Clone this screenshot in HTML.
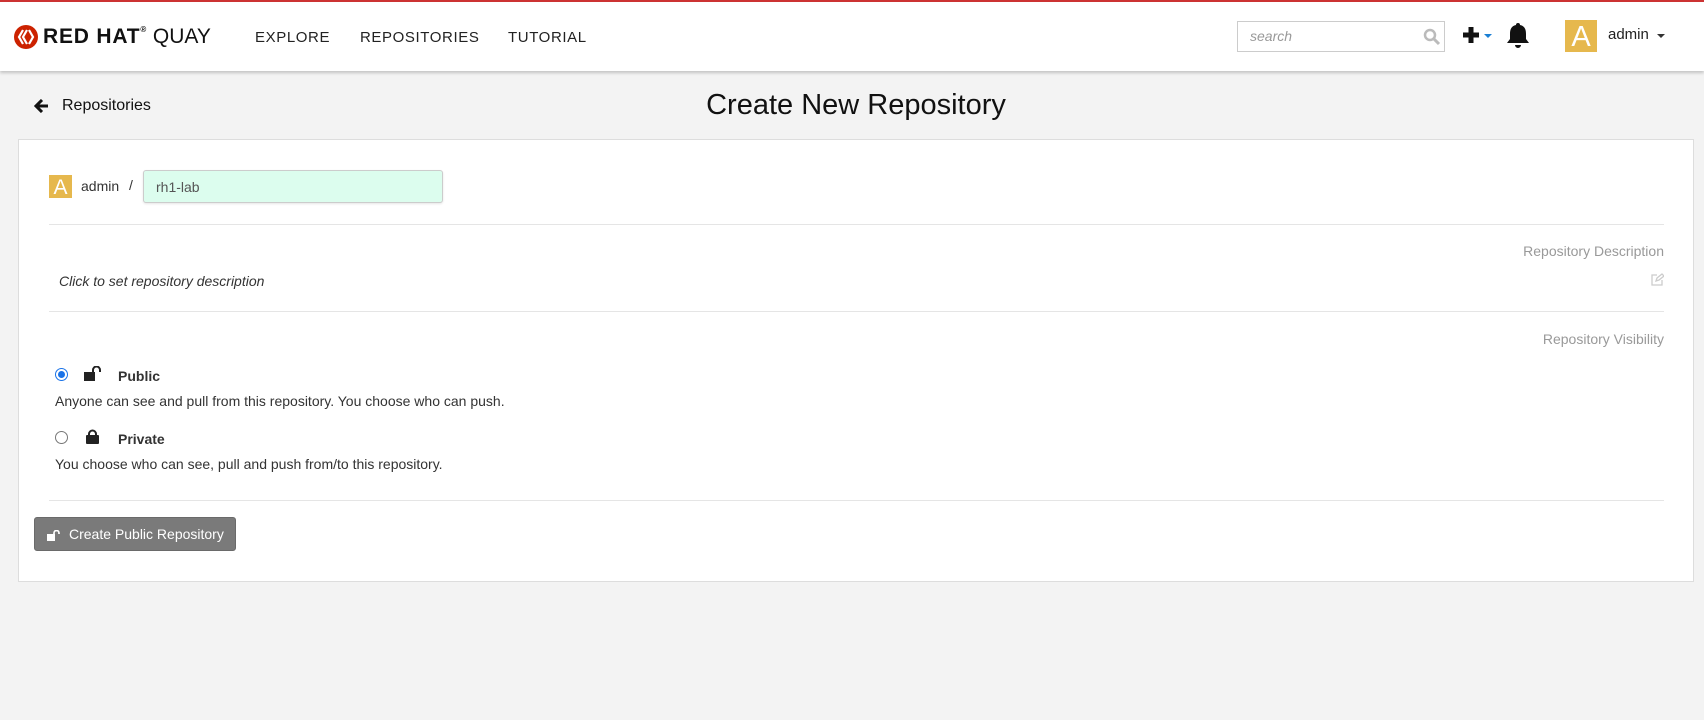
<!DOCTYPE html>
<html><head><meta charset="utf-8"><style>
*{box-sizing:border-box;margin:0;padding:0}
body{width:1704px;height:720px;background:#f3f3f3;font-family:"Liberation Sans",sans-serif;color:#333;position:relative;overflow:hidden;font-size:14px}
.a{position:absolute;white-space:nowrap}
#hdr{position:absolute;left:0;top:0;width:1704px;height:71px;background:#fff;border-top:2px solid #cc3333;box-shadow:0 2px 3px rgba(0,0,0,.2)}
.nav{font-size:15px;letter-spacing:0.6px;color:#222;top:27px}
#panel{position:absolute;left:18px;top:139px;width:1676px;height:443px;background:#fff;border:1px solid #ddd}
.hr{position:absolute;left:49px;width:1615px;height:1px;background:#e5e5e5}
.lbl{color:#999;right:40px}
</style></head><body>
<div id="hdr">
 <svg class="a" style="left:14px;top:23px" width="24" height="24" viewBox="0 0 24 24"><circle cx="12" cy="12" r="12" fill="#cc2200"/><path d="M9 5 L5 12 L9 19 M13 5 L9 12 L13 19 M15 5 L19 12 L15 19" stroke="#fff" stroke-width="2.2" fill="none"/></svg>
 <div class="a" style="left:43px;top:23px;font-size:21px;font-weight:900;letter-spacing:0.8px;color:#111">RED HAT<span style="font-size:8px;vertical-align:top">®</span><span style="font-weight:400;letter-spacing:0"> QUAY</span></div>
 <div class="a nav" style="left:255px">EXPLORE</div>
 <div class="a nav" style="left:360px">REPOSITORIES</div>
 <div class="a nav" style="left:508px">TUTORIAL</div>
 <div class="a" style="left:1237px;top:19px;width:208px;height:31px;border:1px solid #ccc"><span class="a" style="left:12px;top:6px;font-style:italic;color:#999">search</span>
  <svg class="a" style="left:185px;top:6px" width="18" height="18" viewBox="0 0 18 18"><circle cx="7" cy="7" r="5" stroke="#bbb" stroke-width="2.5" fill="none"/><path d="M11 11 L16 16" stroke="#bbb" stroke-width="3"/></svg></div>
 <svg class="a" style="left:1461px;top:23px" width="20" height="20" viewBox="0 0 20 20"><path d="M10 2V18M2 10H18" stroke="#111" stroke-width="5"/></svg>
 <div class="a" style="left:1484px;top:32px;border:4px solid transparent;border-top:4px solid #1a7fd4;border-bottom:0"></div>
 <svg class="a" style="left:1506px;top:20px" width="24" height="27" viewBox="0 0 24 27"><path d="M12 1a2 2 0 0 1 2 2c5 1 6 5 6 9v5l3 4H1l3-4v-5c0-4 1-8 6-9a2 2 0 0 1 2-2zM9 23h6a3 3 0 0 1-6 0z" fill="#111"/></svg>
 <div class="a" style="left:1565px;top:18px;width:32px;height:32px;background:#e6b84d;color:#fff;font-size:29px;text-align:center;line-height:34px">A</div>
 <div class="a" style="left:1608px;top:24px;font-size:15px;color:#222">admin</div>
 <div class="a" style="left:1657px;top:32px;border:4px solid transparent;border-top:4px solid #333;border-bottom:0"></div>
</div>
<svg class="a" style="left:34px;top:99px" width="15" height="14" viewBox="0 0 15 14"><path d="M8 1L2 7L8 13M2 7H14" stroke="#111" stroke-width="3" fill="none"/></svg>
<div class="a" style="left:62px;top:97px;font-size:16px;color:#111">Repositories</div>
<div class="a" style="left:0;width:1712px;text-align:center;top:89px;font-size:29px;color:#111">Create New Repository</div>
<div id="panel"></div>
<div class="a" style="left:49px;top:175px;width:23px;height:23px;background:#e6b84d;color:#fff;font-size:21px;text-align:center;line-height:25px">A</div>
<div class="a" style="left:81px;top:178px">admin</div>
<div class="a" style="left:129px;top:177px">/</div>
<div class="a" style="left:143px;top:170px;width:300px;height:33px;background:#dcfdee;border:1px solid #ccc;border-radius:3px;box-shadow:0 1px 2px rgba(0,0,0,.1)"><span class="a" style="left:12px;top:8px;color:#555">rh1-lab</span></div>
<div class="hr" style="top:224px"></div>
<div class="a lbl" style="top:243px">Repository Description</div>
<div class="a" style="left:59px;top:273px;font-style:italic">Click to set repository description</div>
<svg class="a" style="left:1651px;top:273px" width="13" height="13" viewBox="0 0 13 13"><path d="M6 2H1v10h10V7M5 8l1-3 5-4 2 2-5 4z" stroke="#ccc" stroke-width="1.3" fill="none"/></svg>
<div class="hr" style="top:311px"></div>
<div class="a lbl" style="top:331px">Repository Visibility</div>
<div class="a" style="left:55px;top:368px;width:13px;height:13px;border-radius:50%;border:1px solid #1a73e8;background:#fff"><div class="a" style="left:2px;top:2px;width:7px;height:7px;border-radius:50%;background:#1a73e8"></div></div>
<svg class="a" style="left:84px;top:366px" width="18" height="15" viewBox="0 0 18 15"><rect x="0" y="6" width="11" height="9" fill="#222"/><path d="M9 7V4a3.5 3.5 0 0 1 7 0v2" stroke="#222" stroke-width="2" fill="none"/></svg>
<div class="a" style="left:118px;top:368px;font-weight:bold">Public</div>
<div class="a" style="left:55px;top:393px">Anyone can see and pull from this repository. You choose who can push.</div>
<div class="a" style="left:55px;top:431px;width:13px;height:13px;border-radius:50%;border:1px solid #777;background:#fff"></div>
<svg class="a" style="left:86px;top:429px" width="13" height="15" viewBox="0 0 13 15"><rect x="0" y="6" width="13" height="9" rx="1" fill="#222"/><path d="M3 7V5a3.5 3.5 0 0 1 7 0v2" stroke="#222" stroke-width="2" fill="none"/></svg>
<div class="a" style="left:118px;top:431px;font-weight:bold">Private</div>
<div class="a" style="left:55px;top:456px">You choose who can see, pull and push from/to this repository.</div>
<div class="hr" style="top:500px"></div>
<div class="a" style="left:34px;top:517px;width:202px;height:34px;background:#7a7a7a;border:1px solid #6a6a6a;border-radius:3px;color:#fff"><svg class="a" style="left:12px;top:12px" width="14" height="11" viewBox="0 0 14 11"><rect x="0" y="4" width="8" height="7" fill="#fff"/><path d="M7 5V3a2.5 2.5 0 0 1 5 0v1" stroke="#fff" stroke-width="1.7" fill="none"/></svg><span class="a" style="left:34px;top:8px">Create Public Repository</span></div>
</body></html>
